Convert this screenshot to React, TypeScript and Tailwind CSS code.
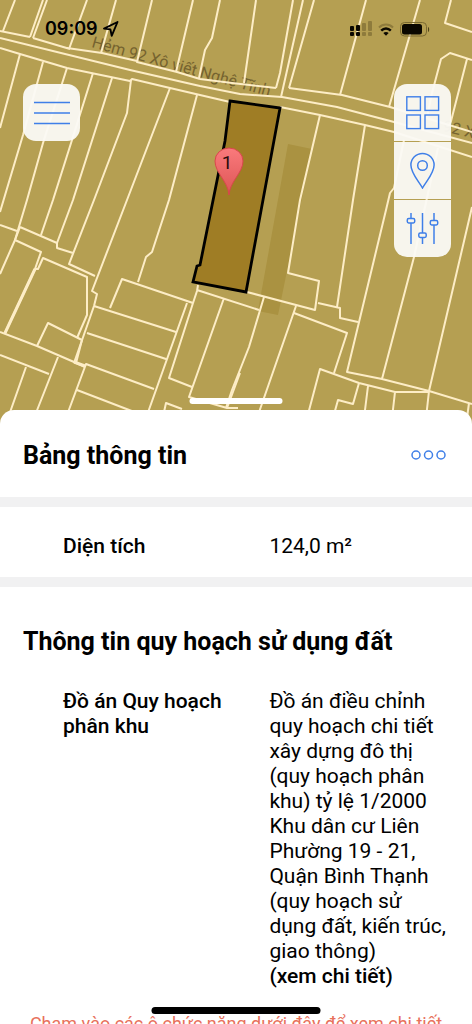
import React from "react";

const roads = [
  "M0 31 30 37M33 38 70 49M67 48 102 53 137 61V62L177 72 200 79M200 79 232 83 276 88",
  "M0 38 130 70 200 86 240 94 282 97 337 107 394 122 472 143",
  "M0 48 20 54 67 68 130 81 132 79 170 88 230 102",
  "M280 107 320 115 365 125 394 132 472 157",
  "M289 88 342 95 390 107 472 132",
];

const parcels = [
  "M15 0 3 31M43 0 30 37M47 0 33 38M87 0 69 49M116 0 101 53M152 0 137 62M193 0 176 72",
  "M220 0 212 38 205 50 199 78M256 0 244 83M293 0 280 73 276 88M303 0 281 97M314 0 289 88",
  "M366 0 340 95M420 0 389 107M451 0 445 23 472 32M472 60 450 53 441 59 431 97 427 118M467 59 450 125",
  "M20 54 0 128M43 62 23 135 0 212M67 68 43 143 27 200 15 240 0 274M93 73 72 140 53 200 41 235",
  "M112 78 73 200 57 243V248L73 253M131 80 127 113 94 200 69 264 95 276M170 88 127 200 92 291 97 294 94 306 74 363",
  "M197 95 169 200 152 252 146 257 138 282",
  "M0 225 17 231M20 227 57 243M20 227 15 240 41 252 35 269H38L43 258 87 277V315L77 338",
  "M35 269 5 333M0 332 37 346 74 362 85 367M37 346 48 323 82 340 76 363",
  "M0 355 49 374M58 357 34 418M26 367 8 418M67 415 86 364 154 389M77 390 150 418",
  "M94 306 176 332M87 333 166 359M187 303 146 418M110 308 122 279 193 303",
  "M198 285 197 291 193 303 169 378 192 387M197 290 259 310M224 298 189 397 227 408 238 408M240 373 227 408",
  "M264 297 249 347 232 390 226 408M164 412 166 403 182 409",
  "M247 292 315 310 319 281 288 273 300 200 304 183 320 115",
  "M318 303 340 308V318L358 322M337 307 353 200 365 125",
  "M404 140 394 188 390 193 386 210 347 372 382 379 429 391 472 404M438 148 414 257 382 379",
  "M472 207 429 391 426 418M296 306 257 418M294 313 347 333 334 373",
  "M307 418 320 369 359 383 395 392H429M333 418 338 400 353 404 359 383M368 386 364 418M395 392 392 418M469 403 467 418",
];

function ParcelMap() {
  return (
    <svg
      className="absolute inset-0 h-full w-full"
      viewBox="0 0 472 424"
      preserveAspectRatio="xMidYMid slice"
      role="img"
      aria-label="Bản đồ thửa đất"
    >
      <rect width="472" height="424" fill="#b59f52" />
      <g fill="#75632f" fontFamily="Roboto, sans-serif" fontSize="16">
        <text transform="translate(91 47) rotate(15.5)">Hẻm 92 Xô viết Nghệ Tĩnh</text>
        <text transform="translate(442 131) rotate(13)">92 Xô</text>
      </g>
      <path d="M288 144 312 149 278 315 258 311Z" fill="#aa9241" />
      <g fill="none" stroke="#fdedc6" strokeWidth="2" strokeLinejoin="round">
        {roads.map((d) => (
          <path key={d} d={d} />
        ))}
        {parcels.map((d) => (
          <path key={d} d={d} />
        ))}
        <path d="M35 269 5 333M74 362 85 366" strokeWidth="3" />
      </g>
      <path
        d="M230 101 280 108 246 292 193 282 197 266 200 265 225 141Z"
        fill="#9f7d25"
        stroke="#000"
        strokeWidth="2.8"
      />
      <path
        d="M229 195C228 181 215 173 215 161A14 13 0 0 1 243 161C243 173 230 181 229 195Z"
        fill="url(#pin)"
        stroke="#d9474c"
        strokeWidth="1"
      />
      <defs>
        <linearGradient id="pin" x1="0" y1="0" x2="0" y2="1">
          <stop offset="0" stopColor="#fa7a7c" />
          <stop offset="1" stopColor="#dd5555" />
        </linearGradient>
      </defs>
      <text x="227" y="169" textAnchor="middle" fontFamily="Roboto, sans-serif" fontSize="19" fill="#2a0d0d">
        1
      </text>
    </svg>
  );
}

function StatusBar() {
  return (
    <div className="relative flex items-center justify-between pt-[18px] pr-[42px] pl-[45px] text-black">
      <div className="flex items-center gap-1">
        <span className="font-[Inter,sans-serif] text-[18px] leading-[22px] font-semibold">09:09</span>
        <svg width="18" height="18" viewBox="0 0 18 18" fill="none" stroke="currentColor" strokeWidth="1.9" strokeLinejoin="round" aria-hidden="true">
          <path d="M15.5 2 2 8.6 8.4 9.4 9.7 15.8Z" />
        </svg>
      </div>
      <div className="flex items-center gap-1.5">
        <svg width="22" height="16" viewBox="0 0 22 16" aria-hidden="true">
          <g fill="#0b0800">
            <rect x="0" y="5" width="4" height="5" rx="1" />
            <rect x="6" y="4" width="4" height="6" rx="1" />
            <rect x="0" y="11" width="4" height="4" rx="1" />
            <rect x="6" y="11" width="4" height="4" rx="1" />
          </g>
          <g fill="#8e7b3c">
            <rect x="12" y="2" width="4" height="8" rx="1" />
            <rect x="18" y="0" width="4" height="10" rx="1" />
            <rect x="12" y="11" width="4" height="4" rx="1" />
            <rect x="18" y="11" width="4" height="4" rx="1" />
          </g>
        </svg>
        <svg width="16" height="13" viewBox="0 0 16 13" fill="none" aria-hidden="true">
          <path d="M1 4.5C5 .6 11 .6 15 4.5" stroke="#8e7b3c" strokeWidth="2" />
          <path d="M3.2 7.6C6 4.7 10 4.7 12.8 7.6" stroke="#0b0800" strokeWidth="2.4" />
          <path d="M8 12.8 5.3 10C6.8 8.6 9.2 8.6 10.7 10Z" fill="#0b0800" />
        </svg>
        <svg width="30" height="15" viewBox="0 0 30 15" aria-hidden="true">
          <rect x="0.5" y="0.5" width="26" height="13.5" rx="4" fill="none" stroke="#7a6931" />
          <rect x="2" y="2" width="20" height="10.5" rx="2.5" fill="#0b0800" />
          <path d="M28 5V10C29.6 9.4 29.6 5.6 28 5Z" fill="#4f4319" />
        </svg>
      </div>
    </div>
  );
}

const toolClass = "flex h-[57px] w-[57px] items-center justify-center bg-[#fbfaf5]/95 text-[#3f7fe8]";

function MapTools() {
  return (
    <div className="flex flex-col gap-px overflow-hidden rounded-[13px]">
      <button type="button" aria-label="Lớp bản đồ" className={toolClass}>
        <svg width="34" height="34" viewBox="0 0 34 34" fill="none" stroke="currentColor" strokeWidth="1.4">
          <rect x="0.8" y="0.8" width="13.6" height="13.6" />
          <rect x="19" y="0.8" width="13.6" height="13.6" />
          <rect x="0.8" y="19" width="13.6" height="13.6" />
          <rect x="19" y="19" width="13.6" height="13.6" />
        </svg>
      </button>
      <button type="button" aria-label="Vị trí" className={toolClass}>
        <svg width="26" height="37" viewBox="0 0 26 37" fill="none" stroke="currentColor" strokeWidth="1.5">
          <path d="M12.5 36C9 29.5 0.9 21.5 0.9 13A11.6 11.6 0 0 1 24.1 13C24.1 21.5 16 29.5 12.5 36Z" />
          <circle cx="12.5" cy="13.5" r="4.8" />
        </svg>
      </button>
      <button type="button" aria-label="Bộ lọc" className={toolClass}>
        <svg width="34" height="33" viewBox="0 0 34 33" fill="none" stroke="currentColor" strokeWidth="1.5">
          <path d="M5 1V6.5M5 11V32M16.5 1V21M16.5 25.5V32M28 1V8.5M28 13V32" />
          <rect x="1.3" y="6.5" width="7.4" height="4.5" rx="1.4" />
          <rect x="12.8" y="21" width="7.4" height="4.5" rx="1.4" />
          <rect x="24.3" y="8.5" width="7.4" height="4.5" rx="1.4" />
        </svg>
      </button>
    </div>
  );
}

function InfoRow({ label, children }: { label: string; children: React.ReactNode }) {
  return (
    <dl className="grid grid-cols-[minmax(0,8fr)_minmax(0,7fr)] pr-[22px] pl-[63px] text-[21px] leading-[25px]">
      <dt className="pr-4 font-medium">{label}</dt>
      <dd>{children}</dd>
    </dl>
  );
}

export default function App() {
  return (
    <div className="flex h-screen flex-col overflow-hidden bg-white font-[Roboto,'Noto_Sans',sans-serif] text-black">
      <header className="relative h-[424px] shrink-0">
        <ParcelMap />
        <StatusBar />
        <div className="relative flex items-start justify-between pt-[44px] pr-[21px] pl-[23px]">
          <button
            type="button"
            aria-label="Trình đơn"
            className="flex h-[57px] w-[57px] items-center justify-center rounded-[13px] bg-[#fbfaf5]/95 text-[#3f7fe8]"
          >
            <svg width="36" height="24" viewBox="0 0 36 24" fill="none" stroke="currentColor" strokeWidth="1.7">
              <path d="M0 1.5H36M0 12H36M0 22.5H36" />
            </svg>
          </button>
          <MapTools />
        </div>
        <div className="absolute top-[398px] left-1/2 h-[6px] w-[93px] -translate-x-1/2 rounded-full bg-white" />
      </header>
      <main className="relative -mt-[14px] min-h-0 flex-1 overflow-y-auto rounded-t-[14px] bg-white [scrollbar-width:none]">
        <section className="flex items-center justify-between border-b-10 border-[#f1f1f2] px-[23px] pt-[31px] pb-[26px]">
          <h1 className="text-[25px] leading-[30px] font-bold">Bảng thông tin</h1>
          <button type="button" aria-label="Thêm" className="text-[#3f7fe8]">
            <svg width="38" height="12" viewBox="0 0 38 12" fill="none" stroke="currentColor" strokeWidth="1.5">
              <circle cx="5" cy="5" r="4" />
              <circle cx="17.5" cy="5" r="4" />
              <circle cx="30" cy="5" r="4" />
            </svg>
          </button>
        </section>
        <section className="border-b-10 border-[#f1f1f2] pt-[27px] pb-[18px]">
          <InfoRow label="Diện tích">124,0 m²</InfoRow>
        </section>
        <section className="pt-10 pb-12">
          <h2 className="mb-8 px-[23px] text-[25px] leading-[30px] font-bold">Thông tin quy hoạch sử dụng đất</h2>
          <InfoRow label="Đồ án Quy hoạch phân khu">
            Đồ án điều chỉnh quy hoạch chi tiết xây dựng đô thị (quy hoạch phân khu) tỷ lệ 1/2000 Khu dân cư Liên Phường
            19 - 21, Quận Bình Thạnh (quy hoạch sử dụng đất, kiến trúc, giao thông)
            <a href="#chi-tiet" className="block font-medium">
              (xem chi tiết)
            </a>
          </InfoRow>
          <p className="mt-[22px] text-center text-[18px] leading-[25px] text-[#e8715c]">
            Chạm vào các ô chức năng dưới đây để xem chi tiết
          </p>
        </section>
      </main>
      <div className="fixed bottom-[10px] left-1/2 h-[7px] w-[169px] -translate-x-1/2 rounded-full bg-black" />
    </div>
  );
}
